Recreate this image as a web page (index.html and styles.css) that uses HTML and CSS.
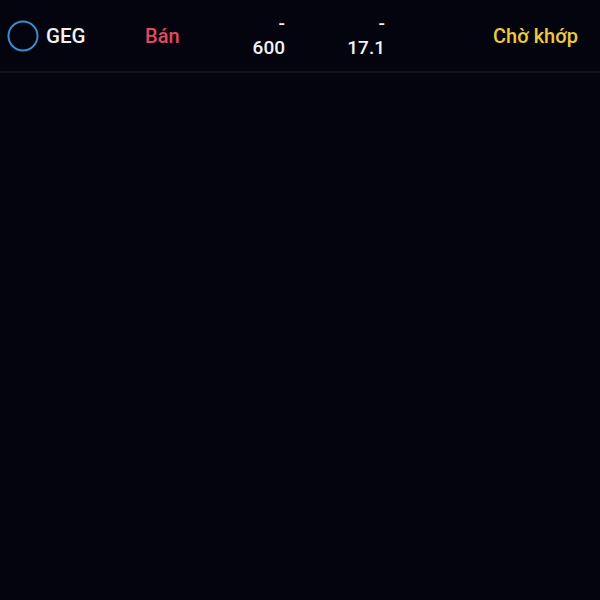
FILE: index.html
```html
<!DOCTYPE html>
<html lang="vi">
<head>
<meta charset="utf-8">
<title>Lệnh</title>
<link rel="stylesheet" href="styles.css">
</head>
<body>
<div class="list">
  <div class="row">
    <div class="cell sym">
      <svg class="radio" width="32" height="32" viewBox="0 0 32 32"><circle cx="16" cy="16" r="14.5" fill="none" stroke="#3a8ccc" stroke-width="2"/></svg>
      <span class="code">GEG</span>
    </div>
    <div class="cell side">Bán</div>
    <div class="cell num"><span class="dash">-</span><span class="val">600</span></div>
    <div class="cell num"><span class="dash">-</span><span class="val">17.1</span></div>
    <div class="cell status">Chờ khớp</div>
  </div>
</div>
</body>
</html>
```
FILE: styles.css
```css
html, body {
  margin: 0;
  padding: 0;
  background: #04040f;
  height: 100%;
}
body {
  font-family: Roboto, "Noto Sans", "Liberation Sans", sans-serif;
  color: #f2f2f2;
}
.row {
  display: grid;
  grid-template-columns: 138px 60px 80px 100px 1fr;
  align-items: center;
  height: 71px;
  padding-left: 7px;
  padding-right: 22px;
  border-bottom: 2px solid #121320;
}
.sym {
  display: flex;
  align-items: center;
  gap: 7px;
}
.radio {
  display: block;
}
.code {
  font-size: 20.5px;
  font-weight: 500;
}
.side {
  color: #e04a5e;
  font-size: 20px;
  font-weight: 500;
}
.num {
  display: flex;
  flex-direction: column;
  align-items: flex-end;
  font-size: 19px;
  font-weight: 500;
  padding-bottom: 1px;
}
.dash {
  line-height: 26px;
}
.val {
  line-height: 22px;
}
.status {
  text-align: right;
  color: #ecca3c;
  font-size: 20px;
  font-weight: 500;
}
```
